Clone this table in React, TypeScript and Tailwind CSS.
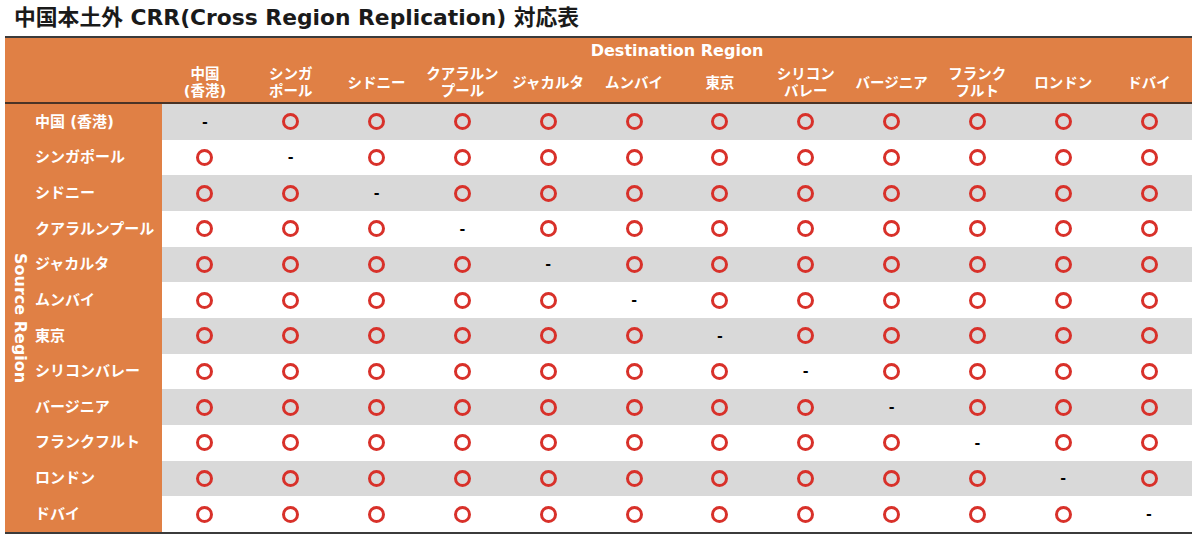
import React from "react"

const regions = [
  ["中国", "(香港)"],
  ["シンガ", "ポール"],
  ["シドニー"],
  ["クアラルン", "プール"],
  ["ジャカルタ"],
  ["ムンバイ"],
  ["東京"],
  ["シリコン", "バレー"],
  ["バージニア"],
  ["フランク", "フルト"],
  ["ロンドン"],
  ["ドバイ"],
]

const sources = [
  "中国 (香港)",
  "シンガポール",
  "シドニー",
  "クアラルンプール",
  "ジャカルタ",
  "ムンバイ",
  "東京",
  "シリコンバレー",
  "バージニア",
  "フランクフルト",
  "ロンドン",
  "ドバイ",
]

const font = { fontFamily: '"DejaVu Sans", "Noto Sans CJK JP", sans-serif' }

const Mark = () => (
  <div className="w-[17px] h-[17px] rounded-full border-[3px] border-[#d8312a]" />
)

const App = () => {
  return (
    <div className="w-[1200px] h-[538px] bg-white text-black" style={font}>
      <div className="h-[36px] flex items-center pl-[14px] pb-[1px]">
        <h1 className="text-[21.8px] font-bold leading-none text-[#1a1a1a]">
          中国本土外 CRR(Cross Region Replication) 対応表
        </h1>
      </div>
      <div className="ml-[5px] w-[1187px] border-t-2 border-b-2 border-[#3b3b3b]">
        {/* header */}
        <div className="flex bg-[#e08045] border-b-2 border-[#4a3326] text-white font-bold">
          <div className="w-[157px] shrink-0" />
          <div className="flex-1 flex flex-col">
            <div className="h-[25px] flex items-center justify-center text-[16px] leading-none pt-[1px]">
              Destination Region
            </div>
            <div className="h-[39px] flex">
              {regions.map((r, i) => (
                <div
                  key={i}
                  className="flex-1 flex flex-col items-center justify-center text-[14.5px] leading-[17px] pt-[1px]"
                >
                  {r.map((l, j) => (
                    <span key={j}>{l}</span>
                  ))}
                </div>
              ))}
            </div>
          </div>
        </div>
        {/* body */}
        <div className="flex">
          <div className="w-[157px] shrink-0 bg-[#e08045] text-white font-bold flex">
            <div className="w-[29px] flex items-center justify-center">
              <span className="[writing-mode:vertical-rl] text-[16px] leading-none pl-[1px]">
                Source Region
              </span>
            </div>
            <div className="flex-1 flex flex-col">
              {sources.map((s) => (
                <div key={s} className="h-[35.67px] flex items-center text-[15px] pl-[1px]">
                  {s}
                </div>
              ))}
            </div>
          </div>
          <div className="flex-1 flex flex-col">
            {sources.map((s, row) => (
              <div
                key={s}
                className={
                  "h-[35.67px] flex " + (row % 2 === 0 ? "bg-[#d9d9d9]" : "bg-white")
                }
              >
                {regions.map((_, col) => (
                  <div key={col} className="flex-1 flex items-center justify-center">
                    {row === col ? (
                      <span className="text-[14px] font-bold leading-none">-</span>
                    ) : (
                      <Mark />
                    )}
                  </div>
                ))}
              </div>
            ))}
          </div>
        </div>
      </div>
    </div>
  )
}

export default App
